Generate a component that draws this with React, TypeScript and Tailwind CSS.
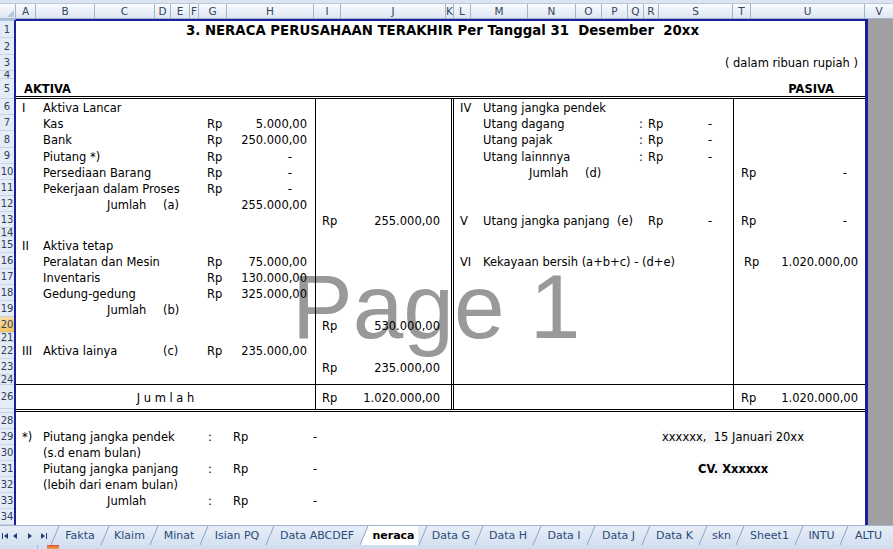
import clsx from "clsx";
import type { ReactNode } from "react";

const cols = [
  { n: "A", w: "w-[20px]" },
  { n: "B", w: "w-[59px]" },
  { n: "C", w: "w-[60px]" },
  { n: "D", w: "w-[16px]" },
  { n: "E", w: "w-[19px]" },
  { n: "F", w: "w-[9px]" },
  { n: "G", w: "w-[28px]" },
  { n: "H", w: "w-[87px]" },
  { n: "I", w: "w-[27px]" },
  { n: "J", w: "w-[105px]" },
  { n: "K", w: "w-[8px]" },
  { n: "L", w: "w-[17px]" },
  { n: "M", w: "w-[57px]" },
  { n: "N", w: "w-[48px]" },
  { n: "O", w: "w-[26px]" },
  { n: "P", w: "w-[26px]" },
  { n: "Q", w: "w-[16px]" },
  { n: "R", w: "w-[15px]" },
  { n: "S", w: "w-[74px]" },
  { n: "T", w: "w-[18px]" },
  { n: "U", w: "w-[114px]" },
];

const rowHeads = [
  ["1", "h-[17px]"], ["2", "h-[17px]"], ["3", "h-[16px]"], ["4", "h-[8px]"], ["5", "h-[20px]"],
  ["6", "h-[16px]"], ["7", "h-[16px]"], ["8", "h-[17px]"], ["9", "h-[16px]"], ["10", "h-[16px]"],
  ["11", "h-[16px]"], ["12", "h-[16px]"], ["13", "h-[16px]"], ["14", "h-[9px]"], ["15", "h-[16px]"],
  ["16", "h-[16px]"], ["17", "h-[16px]"], ["18", "h-[16px]"], ["19", "h-[16px]"], ["20", "h-[16px]"],
  ["21", "h-[9px]"], ["22", "h-[17px]"], ["23", "h-[16px]"], ["24", "h-[10px]"], ["26", "h-[24px]"],
  ["", "h-[4px]"], ["28", "h-[16px]"], ["29", "h-[16px]"], ["30", "h-[16px]"], ["31", "h-[16px]"],
  ["32", "h-[16px]"], ["33", "h-[16px]"], ["34", "h-[16px]"],
];

const tabs = [
  { n: "Fakta", w: "w-[50px]" },
  { n: "Klaim", w: "w-[49px]" },
  { n: "Minat", w: "w-[50px]" },
  { n: "Isian PQ", w: "w-[66px]" },
  { n: "Data ABCDEF", w: "w-[94px]" },
  { n: "neraca", w: "w-[59px]", on: true },
  { n: "Data G", w: "w-[56px]" },
  { n: "Data H", w: "w-[58px]" },
  { n: "Data I", w: "w-[54px]" },
  { n: "Data J", w: "w-[55px]" },
  { n: "Data K", w: "w-[57px]" },
  { n: "skn", w: "w-[37px]" },
  { n: "Sheet1", w: "w-[59px]" },
  { n: "INTU", w: "w-[45px]" },
  { n: "ALTU", w: "w-[49px]" },
];

// one row of the bordered balance table: four blocks split by the black rules
function TRow({ h, className, l, m, r, ra }: { h: string; className?: string; l?: ReactNode; m?: ReactNode; r?: ReactNode; ra?: ReactNode }) {
  return (
    <div className={clsx("flex", h, className)}>
      <div className="w-[299px] shrink-0">{l}</div>
      <div className="w-[136px] shrink-0 border-l border-black">{m}</div>
      <div className="w-[282px] shrink-0 border-l-[3px] border-double border-black">{r}</div>
      <div className="flex-1 border-l border-black">{ra}</div>
    </div>
  );
}

function Left({ n, label, amt, rp = true }: { n?: string; label?: ReactNode; amt?: string; rp?: boolean }) {
  return (
    <div className="grid h-full grid-cols-[27px_164px_30px_78px] items-center pt-[3px]">
      <span className="pl-[6px]">{n}</span>
      <span className="whitespace-pre">{label}</span>
      <span>{amt && rp ? "Rp" : ""}</span>
      <span className={clsx("text-right", amt === "-" ? "pr-[23px]" : "pr-[8px]")}>{amt}</span>
    </div>
  );
}

function Pair({ a, tag, w = "w-[120px]", pl = "pl-[64px]" }: { a: string; tag?: string; w?: string; pl?: string }) {
  return (
    <span className="flex">
      <span className={clsx(w, pl)}>{a}</span>
      <span>{tag}</span>
    </span>
  );
}

function Amt({ v, pl = "pl-[6px]", pr = "pr-[11px]" }: { v: string; pl?: string; pr?: string }) {
  return (
    <div className={clsx("flex h-full items-center justify-between pt-[3px]", pl, pr)}>
      <span>Rp</span>
      <span>{v}</span>
    </div>
  );
}

function Right({ n, label, colon, rp, dash }: { n?: string; label?: ReactNode; colon?: boolean; rp?: boolean; dash?: boolean }) {
  return (
    <div className="grid h-full grid-cols-[29px_154px_11px_52px_33px] items-center pt-[3px]">
      <span className="pl-[6px]">{n}</span>
      <span className="whitespace-pre">{label}</span>
      <span className="pl-[2px]">{colon ? ":" : ""}</span>
      <span>{rp ? "Rp" : ""}</span>
      <span className="pl-[8px]">{dash ? "-" : ""}</span>
    </div>
  );
}

function Foot({ n, label, val, side }: { n?: string; label?: ReactNode; val?: boolean; side?: ReactNode }) {
  return (
    <div className="grid h-[16px] grid-cols-[27px_164px_26px_77px_352px_1fr] items-center pt-[2px]">
      <span className="pl-[6px]">{n}</span>
      <span className="whitespace-pre">{label}</span>
      <span className="pl-[1px]">{val ? ":" : ""}</span>
      <span>{val ? "Rp" : ""}</span>
      <span className="pl-[3px]">{val ? "-" : ""}</span>
      <span className="whitespace-pre">{side}</span>
    </div>
  );
}

function NavArrows() {
  return (
    <svg width="50" height="20" viewBox="0 0 50 20" className="shrink-0">
      <g fill="#1f3f77">
        <rect x="2" y="7" width="1" height="6" />
        <path d="M4 10 L8 7 L8 13 Z" />
        <path d="M13 10 L17 7 L17 13 Z" />
        <path d="M32 10 L28 7 L28 13 Z" />
        <path d="M45 10 L41 7 L41 13 Z" />
        <rect x="46" y="7" width="1" height="6" />
      </g>
    </svg>
  );
}

export default function App() {
  return (
    <div className="flex h-[549px] w-[893px] flex-col overflow-hidden bg-white font-['DejaVu_Sans',sans-serif] text-[11.5px] leading-none text-black">
      {/* top strip */}
      <div className="h-[4px] border-b border-[#b9c8dc] bg-[#dce4ef]" />

      {/* column letters */}
      <div className="flex h-[15px] border-b border-[#9eb6ce] bg-linear-to-b from-[#f8fafd] to-[#dfe7f3] text-[10.5px] text-[#33465f]">
        <div className="flex w-[16px] shrink-0 items-end justify-end border-r border-[#9eb6ce] pb-[1px] pr-[1px]">
          <svg width="7" height="7" viewBox="0 0 7 7">
            <path d="M7 0 L7 7 L0 7 Z" fill="#b7c6da" />
          </svg>
        </div>
        {cols.map((c) => (
          <div key={c.n} className={clsx(c.w, "flex shrink-0 items-center justify-center overflow-hidden border-r border-[#9eb6ce]")}>
            {c.n}
          </div>
        ))}
        <div className="flex flex-1 items-center justify-center">V</div>
      </div>

      <div className="flex h-[506px]">
        {/* row numbers */}
        <div className="flex w-[16px] shrink-0 flex-col border-t-2 border-r-2 border-t-[#b0c2d8] border-r-[#1a1f9e] bg-[#e4ecf7] text-[10px] text-[#2e405c]">
          {rowHeads.map(([n, h], i) => (
            <div
              key={i}
              className={clsx(
                h,
                "flex shrink-0 items-center justify-center overflow-hidden border-b border-[#c6d4e6] pt-[1px]",
                n === "20" && "bg-linear-to-b from-[#fbdca4] to-[#f3c265]",
              )}
            >
              {n}
            </div>
          ))}
        </div>

        {/* page 1 */}
        <div className="relative w-[852px] shrink-0 border-t-2 border-r-[3px] border-[#1a1f9e] bg-white">
          <div className="pointer-events-none absolute left-[276px] top-[240px] font-['Liberation_Sans',Arial,sans-serif] text-[91px] leading-none text-[#999999]">
            Page 1
          </div>

          <div className="relative">
            <div className="flex h-[17px] items-center justify-center pl-[4px] pt-[2px] text-[13.3px] font-bold whitespace-pre">
              3. NERACA PERUSAHAAN TERAKHIR Per Tanggal 31  Desember  20xx
            </div>
            <div className="h-[17px]" />
            <div className="flex h-[16px] items-center justify-end pr-[7px] pt-[2px]">( dalam ribuan rupiah )</div>
            <div className="h-[8px]" />
            <div className="flex h-[20px] items-center justify-between border-b-[3px] border-double border-black pl-[8px] pr-[31px] pt-[4px] font-bold">
              <span>AKTIVA</span>
              <span>PASIVA</span>
            </div>

            <TRow h="h-[16px]" l={<Left n="I" label="Aktiva Lancar" />} r={<Right n="IV" label="Utang jangka pendek" />} />
            <TRow h="h-[16px]" l={<Left label="Kas" amt="5.000,00" />} r={<Right label="Utang dagang" colon rp dash />} />
            <TRow h="h-[17px]" l={<Left label="Bank" amt="250.000,00" />} r={<Right label="Utang pajak" colon rp dash />} />
            <TRow h="h-[16px]" l={<Left label="Piutang *)" amt="-" />} r={<Right label="Utang lainnnya" colon rp dash />} />
            <TRow
              h="h-[16px]"
              l={<Left label="Persediaan Barang" amt="-" />}
              r={<Right label={<Pair a="Jumlah" tag="(d)" w="w-[102px]" pl="pl-[46px]" />} />}
              ra={<Amt v="-" pl="pl-[7px]" pr="pr-[18px]" />}
            />
            <TRow h="h-[16px]" l={<Left label="Pekerjaan dalam Proses" amt="-" />} />
            <TRow h="h-[16px]" l={<Left label={<Pair a="Jumlah" tag="(a)" />} amt="255.000,00" rp={false} />} />
            <TRow
              h="h-[16px]"
              m={<Amt v="255.000,00" />}
              r={<Right n="V" label="Utang jangka panjang  (e)" rp dash />}
              ra={<Amt v="-" pl="pl-[7px]" pr="pr-[18px]" />}
            />
            <TRow h="h-[9px]" />
            <TRow h="h-[16px]" l={<Left n="II" label="Aktiva tetap" />} />
            <TRow
              h="h-[16px]"
              l={<Left label="Peralatan dan Mesin" amt="75.000,00" />}
              r={
                <div className="flex h-full items-center pt-[3px]">
                  <span className="w-[29px] pl-[6px]">VI</span>
                  <span className="whitespace-pre">Kekayaan bersih (a+b+c) - (d+e)</span>
                </div>
              }
              ra={<Amt v="1.020.000,00" pl="pl-[10px]" pr="pr-[7px]" />}
            />
            <TRow h="h-[16px]" l={<Left label="Inventaris" amt="130.000,00" />} />
            <TRow h="h-[16px]" l={<Left label="Gedung-gedung" amt="325.000,00" />} />
            <TRow h="h-[16px]" l={<Left label={<Pair a="Jumlah" tag="(b)" />} />} />
            <TRow h="h-[16px]" m={<Amt v="530.000,00" />} />
            <TRow h="h-[9px]" />
            <TRow
              h="h-[17px]"
              l={<Left n="III" label={<Pair a="Aktiva lainya" tag="(c)" pl="pl-0" />} amt="235.000,00" />}
            />
            <TRow h="h-[16px]" m={<Amt v="235.000,00" />} />
            <TRow h="h-[10px]" className="border-b border-black" />
            <TRow
              h="h-[24px]"
              l={<div className="flex h-full items-center justify-center pt-[3px]">J u m l a h</div>}
              m={<Amt v="1.020.000,00" />}
              ra={<Amt v="1.020.000,00" pl="pl-[7px]" pr="pr-[7px]" />}
            />
            <div className="h-[4px] border-t-[3px] border-double border-black" />

            <div className="h-[16px]" />
            <Foot n="*)" label="Piutang jangka pendek" val side={<span className="bg-[#f7f7f7]">xxxxxx,  15 Januari 20xx</span>} />
            <Foot label="(s.d enam bulan)" />
            <Foot label="Piutang jangka panjang" val side={<span className="ml-[36px] bg-[#f7f7f7] font-bold">CV. Xxxxxx</span>} />
            <Foot label="(lebih dari enam bulan)" />
            <Foot label={<span className="pl-[64px]">Jumlah</span>} val />
            <div className="h-[16px]" />
          </div>
        </div>

        <div className="flex-1 bg-[#a0a0a0]" />
      </div>

      {/* sheet tabs */}
      <div className="flex h-[20px] items-stretch overflow-hidden border-t border-[#9eb6ce] bg-linear-to-b from-[#e6edf7] to-[#d5e1f1] text-[11px] text-[#2a4a7b]">
        <NavArrows />
        {tabs.map((t) => (
          <div key={t.n} className={clsx(t.w, "flex shrink-0")}>
            <svg width="10" height="19" viewBox="0 0 10 19" className="shrink-0">
              {t.on && <path d="M1 19 L9 0 L10 0 L10 19 Z" fill="#ffffff" />}
              <path d="M1 19 L9 0" stroke="#8da3c1" strokeWidth="1" fill="none" />
            </svg>
            <span
              className={clsx(
                "flex flex-1 items-center justify-center whitespace-pre",
                t.on && "bg-white font-bold text-black",
              )}
            >
              {t.n}
            </span>
          </div>
        ))}
      </div>
      <div className="flex h-[4px] bg-[#d2deef]">
        <div className="w-[38px] border-r border-[#a9bbd4]" />
        <div className="ml-[9px] h-[4px] w-[12px] bg-linear-to-b from-[#e0502a] to-[#f1a25a]" />
      </div>
    </div>
  );
}
